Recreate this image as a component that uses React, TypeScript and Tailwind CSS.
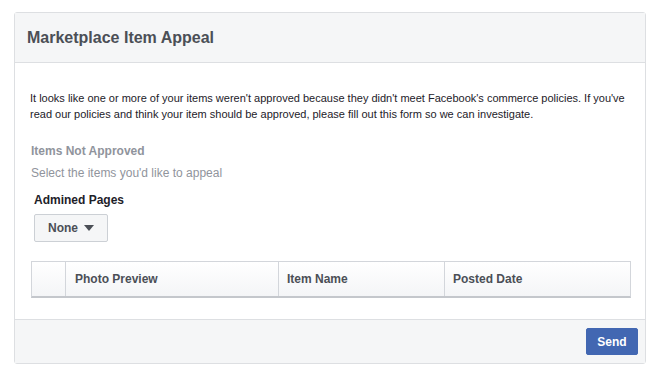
import React from "react";

export default function App() {
  const font = { fontFamily: '"Liberation Sans", Arial, Helvetica, sans-serif' };
  return (
    <div className="w-[660px] h-[374px] bg-white pt-[12px] pl-[14px]" style={font}>
      <div className="w-[632px] border border-[#dddfe2] rounded-[3px] bg-white flex flex-col">
        <div className="h-[50px] bg-[#f5f6f7] border-b border-[#dddfe2] flex items-center pl-[12px]">
          <span className="text-[16px] font-bold text-[#4b4f56]">Marketplace Item Appeal</span>
        </div>
        <div className="pt-[27px] pl-[15px] pr-[12px] pb-[21px]">
          <p className="text-[11px] leading-[16px] text-[#1d2129]">
            It looks like one or more of your items weren't approved because they didn't meet Facebook's commerce policies. If you've read our policies and think your item should be approved, please fill out this form so we can investigate.
          </p>
          <div className="mt-[21px] pl-[1px] text-[12px] font-bold text-[#90949c] leading-[16px]">Items Not Approved</div>
          <div className="mt-[6px] pl-[1px] text-[12px] text-[#90949c] leading-[16px]">Select the items you'd like to appeal</div>
          <div className="mt-[11px] pl-[4px] text-[12px] font-bold text-[#1d2129] leading-[16px]">Admined Pages</div>
          <div className="mt-[6px] pl-[4px]">
            <button className="h-[28px] w-[74px] bg-[#f5f6f7] border border-[#ccd0d5] rounded-[2px] flex items-center justify-center gap-[6px] text-[12px] font-bold text-[#4b4f56]">
              <span>None</span>
              <svg width="10" height="6" viewBox="0 0 10 6"><path d="M0 0h10L5 6z" fill="#4b4f56" /></svg>
            </button>
          </div>
          <div className="mt-[19px] ml-[1px] w-[600px] h-[37px] border border-[#d3d6db] border-b-[2px] border-b-[#c4c7cc] bg-gradient-to-b from-white to-[#f4f5f7] flex text-[12px] font-bold text-[#4b4f56]">
            <div className="w-[34px] border-r border-[#d3d6db]" />
            <div className="w-[213px] border-r border-[#d3d6db] flex items-center pl-[9px]">Photo Preview</div>
            <div className="w-[166px] border-r border-[#d3d6db] flex items-center pl-[8px]">Item Name</div>
            <div className="flex-1 flex items-center pl-[8px]">Posted Date</div>
          </div>
        </div>
        <div className="h-[44px] bg-[#f5f6f7] border-t border-[#dddfe2] flex items-center justify-end pr-[7px]">
          <button className="h-[27px] w-[52px] bg-[#4267b2] border border-[#4267b2] rounded-[2px] text-white text-[12px] font-bold">Send</button>
        </div>
      </div>
    </div>
  );
}
